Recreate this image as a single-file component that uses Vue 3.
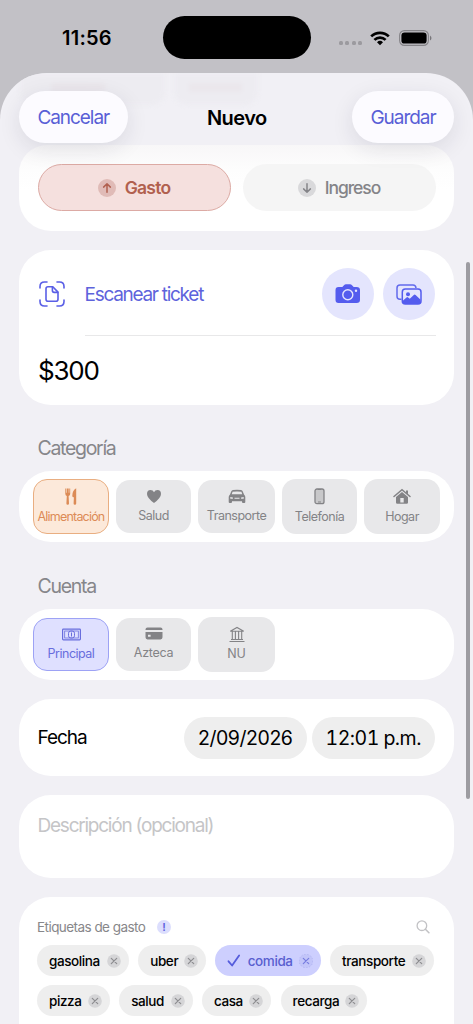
<script setup>
const categories = [
  { name: 'Alimentación', icon: 'fork', cls: 'food' },
  { name: 'Salud', icon: 'heart', cls: 'mid health' },
  { name: 'Transporte', icon: 'car', cls: 'mid car' },
  { name: 'Telefonía', icon: 'phone', cls: 'phone' },
  { name: 'Hogar', icon: 'house', cls: 'home' },
]
const accounts = [
  { name: 'Principal', icon: 'cash', cls: 'main' },
  { name: 'Azteca', icon: 'card', cls: 'azteca' },
  { name: 'NU', icon: 'bank', cls: 'nu' },
]
const tagRows = [
  [
    { name: 'gasolina', w: 92 },
    { name: 'uber', w: 68 },
    { name: 'comida', w: 105.5, on: true },
    { name: 'transporte', w: 104 },
  ],
  [
    { name: 'pizza', w: 73 },
    { name: 'salud', w: 73.5 },
    { name: 'casa', w: 69.5 },
    { name: 'recarga', w: 86.5 },
  ],
]
</script>

<template>
  <main class="screen">
    <div class="status">
      <span class="clock">11:56</span>
      <span class="island"></span>
      <span class="dots"><i v-for="n in 4" :key="n"></i></span>
      <svg class="wifi" viewBox="0 0 20 15" width="20" height="15">
        <g fill="none" stroke="#000" stroke-width="2.7">
          <path d="M1.2 5.4a12.6 12.6 0 0 1 17.6 0" />
          <path d="M4.4 8.9a8 8 0 0 1 11.2 0" />
        </g>
        <path d="M10 14.3l-3-3a4.3 4.3 0 0 1 6 0z" />
      </svg>
      <svg class="battery" viewBox="0 0 33 16" width="33" height="16">
        <rect x=".6" y=".6" width="28.8" height="14.8" rx="4.8" fill="none" stroke="#858488" stroke-width="1.1" />
        <rect x="2.4" y="2.4" width="25.2" height="11.2" rx="3.2" />
        <path d="M31 5.5v5q1.5-1 1.5-2.5T31 5.5z" fill="#77767a" />
      </svg>
    </div>

    <section class="sheet">
      <div class="ghosts"><i></i><i></i></div>
      <header class="bar">
        <button class="nav cancel">Cancelar</button>
        <h1>Nuevo</h1>
        <button class="nav save">Guardar</button>
      </header>

      <div class="card types">
        <div class="type out">
          <svg width="18" height="18" viewBox="0 0 18 18"><circle cx="9" cy="9" r="9" fill="#e0bbb7" /><path d="M9 13.2V5M5.600 8.100L9 4.800l3.400 3.300" /></svg>
          <span>Gasto</span>
        </div>
        <div class="type in">
          <svg width="18" height="18" viewBox="0 0 18 18"><circle cx="9" cy="9" r="9" fill="#d9d9db" /><path d="M9 4.800V13M5.600 9.900L9 13.200l3.400-3.300" /></svg>
          <span>Ingreso</span>
        </div>
      </div>

      <div class="card scan">
        <div class="scan-row">
          <svg width="26" height="26" viewBox="0 0 26 26" fill="none" stroke="#5a5fe6" stroke-width="1.6" stroke-linecap="round" stroke-linejoin="round">
            <path d="M1 7V5.500Q1 1 5.500 1H8M18 1h2.500Q25 1 25 5.500V7M25 19v1.500Q25 25 20.500 25H18M8 25H5.500Q1 25 1 20.500V19" />
            <path d="M9 5.700h4.800l5.200 5.400v7.200q0 2-2 2H9q-2 0-2-2V7.700q0-2 2-2z" />
            <path d="M13.400 6v3.600q0 1.800 1.800 1.800h3.500" />
          </svg>
          <span class="scan-label">Escanear ticket</span>
          <span class="round">
            <svg width="26" height="20" viewBox="0 0 26 20">
              <path fill="#545cee" d="M3.500 3h3.300q.6 0 1-.5L9 1.200Q9.800.3 11 .3h4q1.200 0 2 .9l1.200 1.300q.4.500 1 .5h2.300q3.500 0 3.500 3.300v9.400q0 3.300-3.500 3.300h-18Q.5 19 .5 15.700V6.300Q.5 3 3.500 3z" />
              <circle cx="12.800" cy="10.700" r="5" fill="none" stroke="#e4e5fd" stroke-width="1.400" />
              <circle cx="21" cy="6.800" r="1.200" fill="#e4e5fd" />
            </svg>
          </span>
          <span class="round">
            <svg width="26" height="21" viewBox="0 0 26 21">
              <path d="M5.500 15.200H4Q1 15.200 1 12.200V4q0-3 3-3h13q2.700 0 3 3" fill="none" stroke="#626aec" stroke-width="1.500" />
              <rect x="6.300" y="5" width="18.700" height="15" rx="3" fill="#e4e5fd" stroke="#545cee" stroke-width="1.500" />
              <circle cx="12" cy="10.300" r="2" fill="#545cee" />
              <path d="M6.500 17l4-3.600q.8-.6 1.600 0l1.700 1.400 4-3.900q.9-.8 1.800 0l5 4.800V18q0 2-2 2h-14q-2 0-2-2z" fill="#545cee" />
            </svg>
          </span>
        </div>
        <div class="amount">$300</div>
      </div>

      <h2 class="cat-title">Categoría</h2>
      <div class="card chips">
        <div v-for="c in categories" :key="c.name" class="chip" :class="c.cls">
          <svg v-if="c.icon === 'fork'" width="14" height="17" viewBox="0 0 14 17" fill="currentColor"><path d="M1.300.500v5.200q0 1.700 1.500 2.200L2.400 15.500q0 1.300 1.300 1.300t1.300-1.300L4.600 7.900Q6.200 7.400 6.200 5.700V.5H5.300v4.200h-.6V.5H2.800v4.200h-.6V.5zM12.200.3Q8.300 2.500 8.300 7.800q0 1.500 1.300 1.500h.3l-.3 6.200q0 1.300 1.300 1.300t1.300-1.300V.3z" /></svg>
          <svg v-else-if="c.icon === 'heart'" width="16" height="15" viewBox="0 0 16 15" fill="currentColor"><path d="M8 14Q1 8.900 1 5Q1 1 4.500 1Q7 1 8 3.200Q9 1 11.500 1Q15 1 15 5Q15 8.900 8 14z" /></svg>
          <svg v-else-if="c.icon === 'car'" width="18" height="15" viewBox="0 0 18 15" fill="currentColor"><path fill-rule="evenodd" d="M5 1Q9 .4 13 1q1.300.200 1.800 1.500l1.200 3Q17.300 6.600 17.300 8v5q0 1-1 1H15q-1 0-1-1v-.8H4v.8q0 1-1 1H1.700q-1 0-1-1V8q0-1.400 1.300-2.500l1.200-3Q3.700 1.200 5 1zm-.4 1.800L3.700 5.300h10.600l-.9-2.500Q9 2.100 4.600 2.800zM2.300 8v1.800h2.600V8.600zm13.400 0l-2.600.6v1.200h2.600zM6.500 8.800v1h5v-1z" /></svg>
          <svg v-else-if="c.icon === 'phone'" width="11" height="17" viewBox="0 0 11 17"><rect x="1" y="1" width="9" height="14.700" rx="2" fill="#c8c8ca" stroke="currentColor" stroke-width="1.300" /><path d="M3.800 1.500h3.400M4 14h3" stroke="currentColor" stroke-width="1.200" /></svg>
          <svg v-else width="18" height="16" viewBox="0 0 18 16" fill="currentColor"><path d="M1 8l8-6.800L17 8" fill="none" stroke="currentColor" stroke-width="1.500" stroke-linecap="round" /><path fill-rule="evenodd" d="M13 2h2v4l-2-1.700zM9 3.600l6 5V14q0 1.300-1.300 1.300H4.300Q3 15.300 3 14V8.600zM7.300 14h3.400V9.500H7.300z" /></svg>
          <span>{{ c.name }}</span>
        </div>
      </div>

      <h2 class="acc-title">Cuenta</h2>
      <div class="card chips accounts">
        <div v-for="a in accounts" :key="a.name" class="chip" :class="a.cls">
          <svg v-if="a.icon === 'cash'" width="19" height="12" viewBox="0 0 19 12" fill="none" stroke="currentColor"><rect x=".6" y=".6" width="17.800" height="10.800" rx=".8" stroke-width="1.200" /><rect x="2.700" y="2.500" width="13.600" height="7" stroke-width=".8" /><rect x="6.500" y="2.500" width="6" height="7" rx="2.300" stroke-width="1" /><path d="M9.500 4v4" /></svg>
          <svg v-else-if="a.icon === 'card'" width="18" height="13" viewBox="0 0 18 13"><path fill="currentColor" fill-rule="evenodd" d="M2.500.4h13Q17.500.4 17.500 2.500v.5H.5v-.5Q.5.4 2.500.4zM.5 5h17v5.300q0 2.100-2 2.100h-13q-2 0-2-2.100zM3 7.800v2h2.600v-2z" /></svg>
          <svg v-else width="16" height="16" viewBox="0 0 16 16" fill="none" stroke="currentColor" stroke-width="1.100"><path d="M1.300 4.700L8 1l6.700 3.700zM2 13h12M.5 15h15M3.300 5v8M6.400 5v8M9.600 5v8M12.700 5v8" /></svg>
          <span>{{ a.name }}</span>
        </div>
      </div>

      <div class="card date">
        <span class="date-label">Fecha</span>
        <span class="pill day">2/09/2026</span>
        <span class="pill hour">12:01<b>p.m.</b></span>
      </div>

      <div class="card desc"><span>Descripción (opcional)</span></div>

      <div class="card tags">
        <div class="tags-head">
          <span class="tags-title">Etiquetas de gasto</span>
          <span class="info">!</span>
          <svg class="search" width="14" height="14" viewBox="0 0 14 14" fill="none" stroke="#c2c2c5" stroke-width="1.300" stroke-linecap="round"><circle cx="5.900" cy="5.700" r="4.800" /><path d="M9.400 9.300l3.500 3.400" stroke-width="1.600" /></svg>
        </div>
        <div v-for="(row, i) in tagRows" :key="i" class="tag-row">
          <div v-for="t in row" :key="t.name" class="tag" :class="{ on: t.on }" :style="{ width: t.w + 'px' }">
            <svg v-if="t.on" class="check" width="14" height="13" viewBox="0 0 14 13" fill="none" stroke="#555cdc" stroke-width="1.800" stroke-linecap="round" stroke-linejoin="round"><path d="M1.500 7.300l3.600 4.200 7-10" /></svg>
            <span>{{ t.name }}</span>
            <svg class="x" width="14" height="14" viewBox="0 0 14 14"><circle cx="7" cy="7" r="6.800" /><path d="M4.300 4.300l5.400 5.400M9.700 4.300L4.300 9.700" /></svg>
          </div>
        </div>
      </div>
    </section>
    <div class="scrollbar"></div>
  </main>
</template>

<style>
body { margin: 0; background: #c2c1c6; }
</style>

<style scoped>
* { box-sizing: border-box; }
.screen {
  position: relative;
  width: 473px;
  height: 1024px;
  overflow: hidden;
  background: #c2c1c6;
  font-family: Inter, "Liberation Sans", sans-serif;
  color: #000;
  white-space: nowrap;
}
.status { height: 73px; display: flex; align-items: flex-start; }
.clock { width: 100.500px; margin-left: 62px; padding-top: 26px; font-size: 20px; line-height: 25px; font-weight: 600; letter-spacing: .25px; }
.island { width: 148px; height: 43px; margin-top: 16px; border-radius: 22px; background: #000; }
.dots { display: flex; gap: 2.300px; margin: 41px 0 0 28.500px; }
.dots i { width: 4px; height: 4px; border-radius: 1.500px; background: #9b9a9f; }
.wifi { margin: 30.500px 0 0 8.500px; }
.battery { margin: 30px 0 0 9px; }

.sheet {
  position: relative;
  height: 951px;
  padding: 0 19px;
  border-radius: 47px 47px 0 0;
  background: #f1f0f5;
  overflow: hidden;
}
.ghosts { position: absolute; left: 20px; top: 0; display: flex; gap: 9px; filter: blur(2px); }
.ghosts i { width: 145px; height: 32px; border-radius: 0 0 14px 14px; background: #edecf1; padding: 10px 0 0 32px; }
.ghosts i + i { width: 84px; padding-left: 15px; }
.ghosts i::before { content: ""; display: block; width: 53px; height: 9px; background: #ebe7ec; }
.bar { position: relative; z-index: 2; height: 72px; padding-top: 18px; display: flex; justify-content: space-between; align-items: flex-start; }
.nav {
  height: 52px; border: 0; padding: 0; border-radius: 26px; background: #fcfbff; color: #595fd6;
  font: 400 19px/54px Inter, "Liberation Sans", sans-serif;
  box-shadow: 0 6px 22px rgba(30, 30, 60, .1);
}
.cancel { width: 108.500px; letter-spacing: -1.050px; }
.save { width: 102px; letter-spacing: -1.050px; }
h1 { margin: 0 0 0 -6px; font-size: 20px; line-height: 54px; font-weight: 600; letter-spacing: -.55px; }
.card { background: #fff; border-radius: 32px; }
.types { height: 86px; padding: 19px 18.500px 0; display: flex; gap: 12px; border-radius: 28px 28px 32px 32px; background: linear-gradient(#f8f7f8, #fdfdfd 25px, #fff 45px); }
.type { width: 193px; flex: none; height: 47px; border-radius: 24px; display: flex; align-items: center; justify-content: center; gap: 9px; font-size: 17.500px; }
.type svg path { fill: none; stroke: currentColor; stroke-width: 1.500; stroke-linecap: round; stroke-linejoin: round; }
.out { background: #f5e0de; border: 1.500px solid #dcaaa4; color: #b1604f; font-weight: 600; letter-spacing: -.75px; }
.in { background: #f5f5f5; color: #848488; font-weight: 500; letter-spacing: -1.050px; }

.scan { margin-top: 19px; height: 155px; padding: 18px 18px 0 19px; }
.scan-row { display: flex; height: 68px; align-items: flex-start; position: relative; }
.scan-row::after { content: ""; position: absolute; left: 47px; right: 0; bottom: 0; height: 1.500px; background: #e8e8e9; }
.scan-row > svg { margin: 13px 20px 0 .5px; }
.scan-label { width: 237px; font-size: 19px; line-height: 53px; letter-spacing: -1.280px; color: #5e63dc; }
.round { width: 52px; height: 52px; border-radius: 50%; background: #e4e5fd; display: flex; align-items: center; justify-content: center; flex: none; }
.round + .round { margin-left: 9.500px; }
.amount { font-size: 26px; line-height: 36px; margin-top: 17px; letter-spacing: -1.200px; }

h2 { margin: 0; padding-left: 18.500px; font-size: 19.500px; font-weight: 400; line-height: 26px; height: 26px; color: #86868a; letter-spacing: -1.300px; }
.cat-title { margin-top: 30px; }
.acc-title { margin-top: 31px; }
.chips { margin-top: 10px; height: 71px; padding: 0 14px; display: flex; align-items: center; gap: 7px; }
.chip { width: 76px; height: 55px; border-radius: 14px; background: #e8e8ea; color: #838386; display: flex; flex-direction: column; align-items: center; font-size: 12.500px; letter-spacing: -.5px; }
.chip svg { display: block; height: 17px; margin-top: 9px; }
.chip span { line-height: 18px; margin-top: 3px; }
.mid { height: 53px; width: 75px; }
.chip.mid svg { margin-top: 8px; }
.chip.mid span { margin-top: 2px; }
.chip.mid.car { width: 77px; }
.phone { width: 75px; }
.food { background: #fce9da; border: 1.500px solid #e9ae81; color: #dc8b56; letter-spacing: -.8px; }
.chip.food svg { margin-top: 8px; }
.accounts .chip { width: 76px; height: 53px; }
.accounts .chip.azteca { width: 75px; letter-spacing: -.3px; }
.accounts .chip.nu { width: 77px; height: 55px; letter-spacing: 0; }
.accounts .chip svg { margin-top: 7px; }
.accounts .chip span { margin-top: 2px; }
.accounts .chip.nu svg { margin-top: 9px; }
.accounts .main { background: #dfe0ff; border: 1.500px solid #9da2f5; color: #686ddd; }

.date { margin-top: 19px; height: 77px; padding: 0 19px 0 18.500px; display: flex; align-items: center; }
.date-label { flex: 1; font-size: 19px; letter-spacing: -1.050px; }
.pill { height: 42px; line-height: 42px; border-radius: 21px; background: #eee; text-align: center; font-size: 19.500px; letter-spacing: -.45px; }
.day { width: 122.500px; }
.hour { width: 123.500px; margin-left: 5px; font-variant-numeric: tabular-nums; letter-spacing: -.5px; }
.pill b { font-weight: 400; margin-left: 4.500px; }
.desc { margin-top: 19px; height: 83px; padding: 17px 18.500px; font-size: 19px; line-height: 27px; letter-spacing: -1.230px; color: #c5c5c7; }
.tags { margin-top: 19px; height: 160px; padding: 20px 18px; }
.tags-head { height: 20px; display: flex; align-items: center; margin-bottom: 8px; }
.tags-title { font-size: 13.500px; letter-spacing: -.55px; color: #87878a; width: 120px; }
.info { width: 14px; height: 14px; border-radius: 50%; background: #dcdefd; color: #5c62e0; text-align: center; font-size: 11px; line-height: 14px; font-weight: 600; }
.search { margin: 0 6.500px 0 auto; }
.tag-row { display: flex; gap: 9.200px; margin-bottom: 9px; }
.tag { height: 31px; border-radius: 16px; background: #eee; padding: 0 8px 0 12px; display: flex; align-items: center; justify-content: space-between; font-size: 13.500px; font-weight: 500; letter-spacing: -.4px; flex: none; }
.tag.on { background: #cdcffe; color: #595fd0; }
.x circle { fill: #d5d5d7; }
.x path { stroke: #8d8d90; stroke-width: 1.200; stroke-linecap: round; }
.on .x circle { fill: #c2c5f9; stroke: #a7abef; stroke-width: .6; stroke-dasharray: 1.500 1.500; }
.on .x path { stroke: #777de0; }
.scrollbar { position: absolute; left: 465.500px; top: 262px; width: 4px; height: 537px; border-radius: 2px; background: #9d9ca1; }
</style>
